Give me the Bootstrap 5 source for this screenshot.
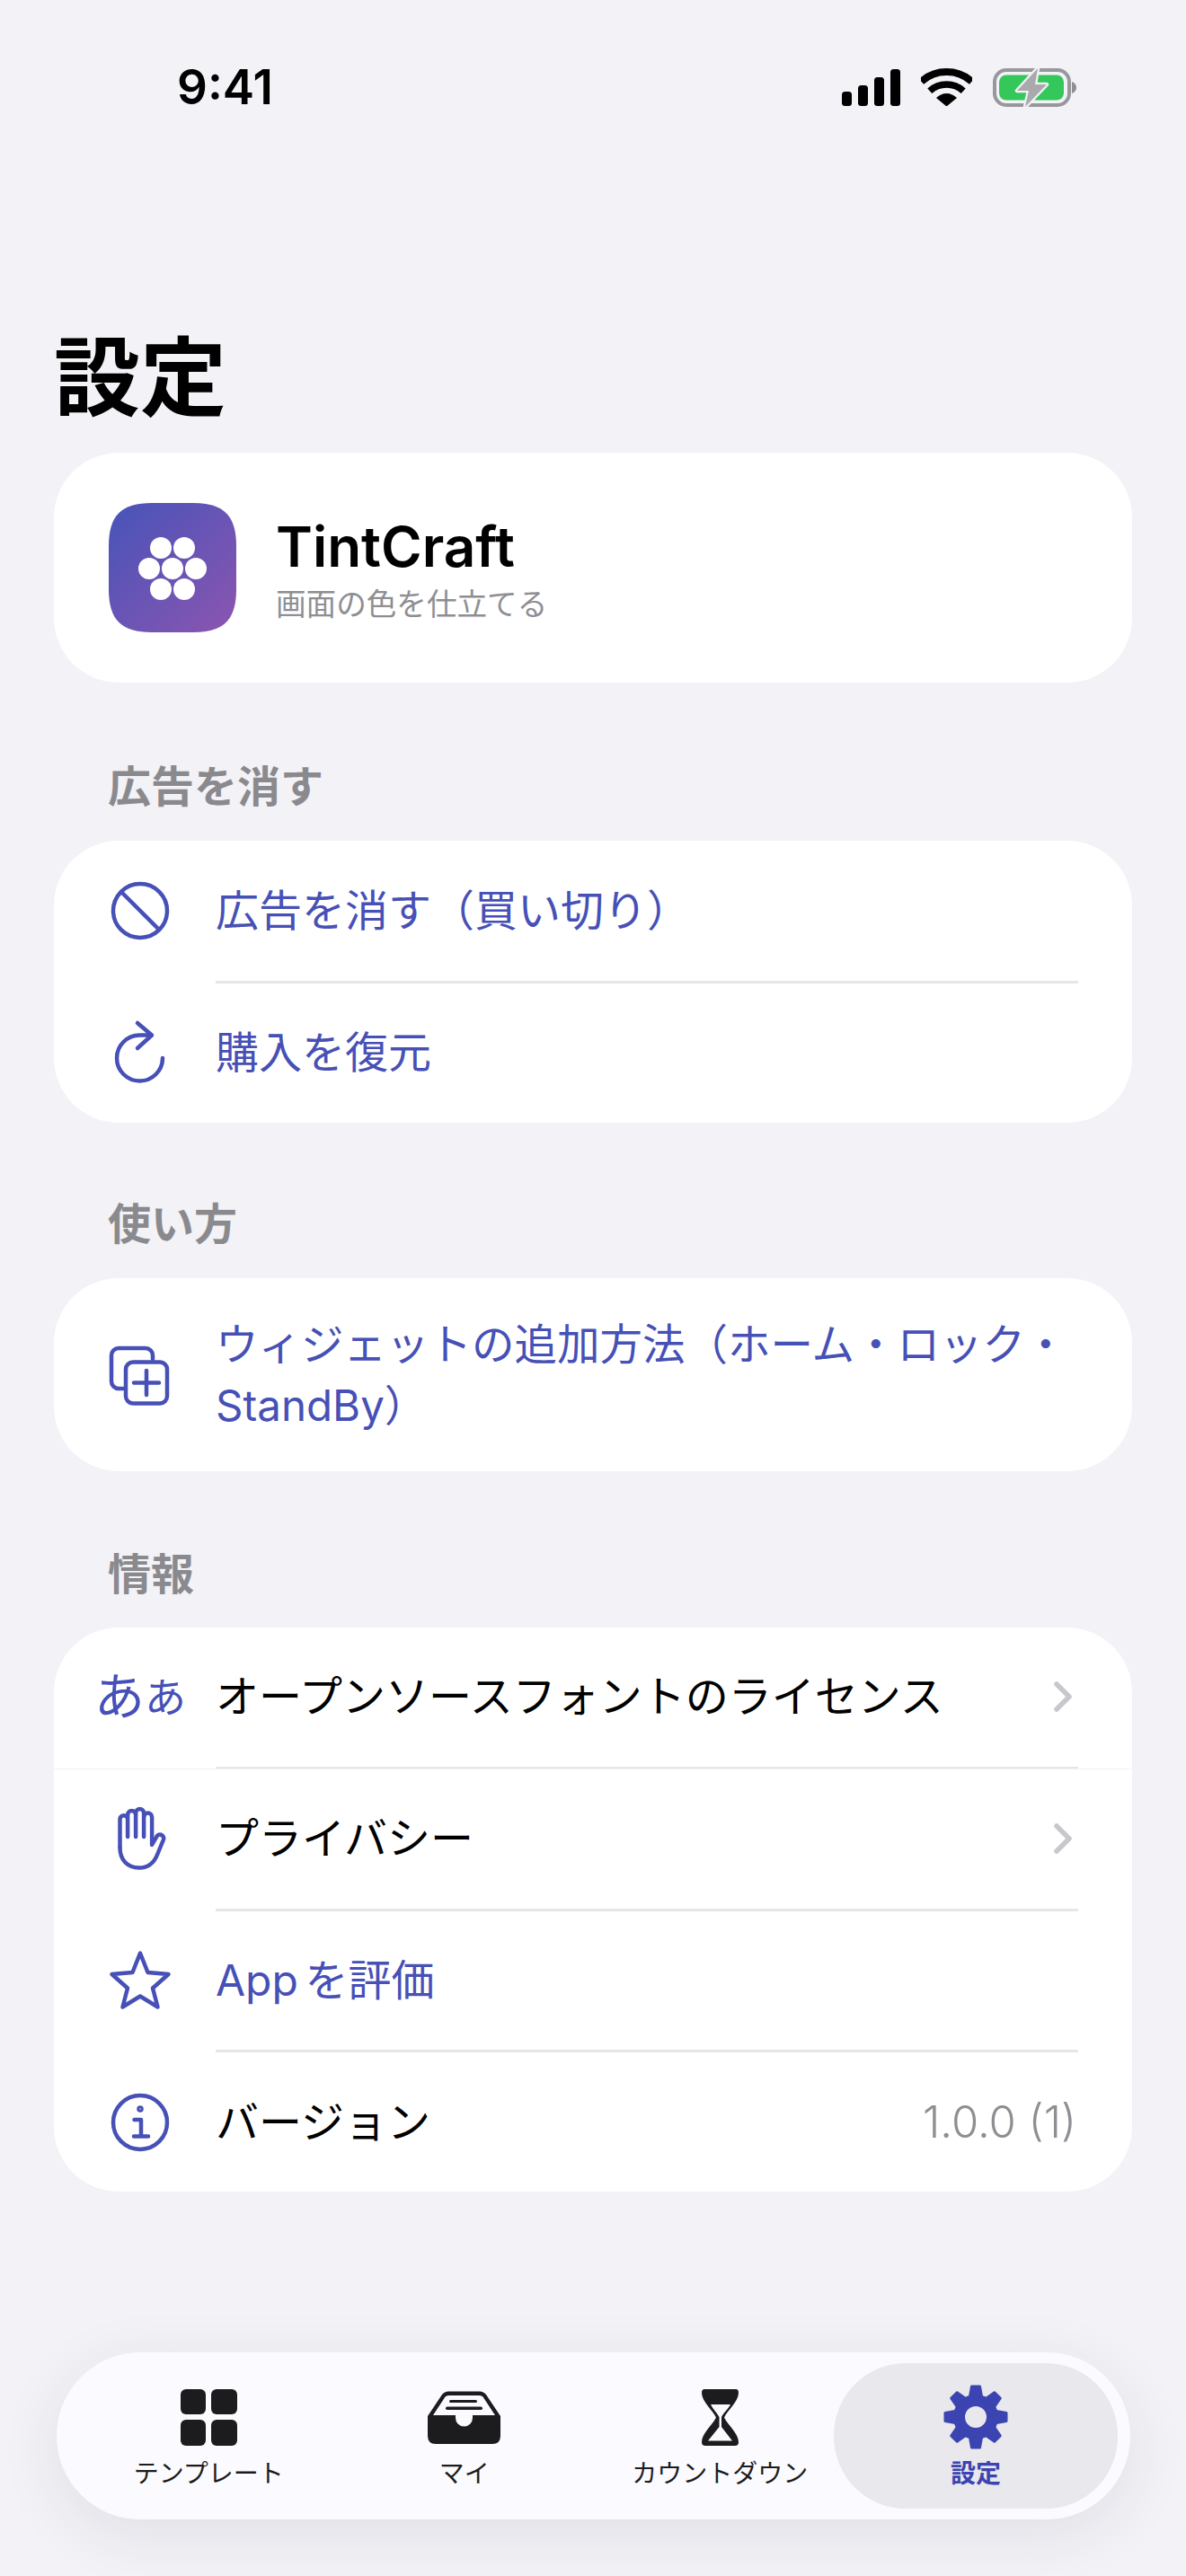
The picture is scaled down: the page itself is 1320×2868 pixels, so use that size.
<!DOCTYPE html>
<html lang="ja">
<head>
  <meta charset="UTF-8" />
  <meta name="viewport" content="width=device-width, initial-scale=1" />
  <title>設定</title>

  <link href="https://cdn.jsdelivr.net/npm/bootstrap@5.3.3/dist/css/bootstrap.min.css" rel="stylesheet">

  <style>
    body {
      font-family: Inter, "Noto Sans CJK JP", sans-serif;
      background-color: #f2f2f7;
      color: #000;
      min-height: 100vh;
    }
    .status-strip {
      padding: 66px 122px 0 197px;
      height: 128px;
    }
    .status-time {
      font-size: 53px;
      font-weight: 600;
      line-height: 62px;
    }
    .status-icons { gap: 23px; }
    .page-title {
      font-size: 96px;
      font-weight: 700;
      line-height: 110px;
      margin: 237px 0 29px 60px;
    }
    .pref-card {
      margin: 0 60px;
      background-color: #fff;
      border-radius: 72px;
      border: 0;
      overflow: hidden;
    }
    .app-card {
      height: 256px;
      padding-left: 61px;
      gap: 44px;
    }
    .app-icon { width: 142px; height: 144px; }
    .app-name {
      font-size: 62px;
      font-weight: 600;
      line-height: 72px;
      margin-top: 3px;
    }
    .app-sub {
      font-size: 33.6px;
      line-height: 44px;
      color: #8e8e93;
      margin-top: 6px;
    }
    .group-label {
      font-size: 48px;
      font-weight: 700;
      line-height: 60px;
      color: #8a8a8e;
      margin: 85px 0 30px 120px;
    }
    .group-label.is-ads { margin: 86px 0 30px 120px; }
    .group-label.is-howto { margin-top: 83px; }
    .group-label.is-info { margin-bottom: 29px; }
    .pref-row {
      height: 155.5px;
      padding: 0 62px 0 0;
      border: 0;
      background: none;
      font-size: 48px;
      line-height: 68px;
      color: #000;
    }
    .pref-row.is-tall { height: 215px; font-size: 47.5px; }
    .pref-row.is-dense { height: 154.75px; }
    .pref-row.is-link { color: #4650b6; }
    .pref-ico {
      width: 180px;
      padding-left: 56px;
      flex: none;
    }
    .pref-ico svg, .ico-kana { width: 80px; height: 80px; display: block; }
    .ico-stroke {
      fill: none;
      stroke: #4650b6;
      stroke-width: 4.5;
      stroke-linecap: round;
      stroke-linejoin: round;
    }
    .ico-kana {
      color: #4650b6;
      white-space: nowrap;
      font-size: 56px;
      line-height: 80px;
    }
    .ico-kana small { font-size: 46px; }
    .row-sep {
      height: 3px;
      margin: 0 60px 0 180px;
      background-color: #e6e6e9;
    }
    .row-rule {
      height: 1px;
      margin-top: -1px;
      background-color: #f2f2f7;
    }
    .app-rate { word-spacing: -6px; }
    .row-hint { color: #8e8e93; font-size: 49px; font-weight: 300; }
    .row-chev { width: 20px; height: 34px; margin-right: 5px; }
    .tab-shell {
      width: 1195px;
      height: 186px;
      margin: 179px 0 0 63px;
      padding: 12px 14px 12px 27px;
      border-radius: 93px;
      background-color: #fbfbff;
      box-shadow: 0 16px 70px rgba(40, 40, 60, .09);
    }
    .tab-cell {
      width: 284.5px;
      padding-top: 24px;
      color: #1c1c1e;
      font-size: 28px;
      line-height: 36px;
    }
    .tab-cell.is-on {
      width: 316px;
      margin-left: -15.5px;
      border-radius: 80px;
      background-color: #e8e8ed;
      color: #3b44b0;
      font-weight: 700;
    }
    .tab-ico {
      height: 72px;
      margin-bottom: 9px;
    }
    .tile-grid {
      display: grid;
      grid-template-columns: 28.5px 28.5px;
      grid-auto-rows: 28.5px;
      gap: 6px;
    }
    .tile-grid span { background-color: #1c1c1e; border-radius: 6px; }
  </style>
</head>

<body>
  <!-- Status bar -->
  <div class="status-strip d-flex justify-content-between align-items-center">
    <div class="status-time">9:41</div>
    <div class="status-icons d-flex align-items-center">
      <svg width="65" height="41" viewBox="0 0 65 41">
        <rect x="0" y="25" width="11" height="16" rx="3.5" />
        <rect x="18" y="18" width="11" height="23" rx="3.5" />
        <rect x="36" y="9" width="11" height="32" rx="3.5" />
        <rect x="54" y="0" width="11" height="41" rx="3.5" />
      </svg>
      <svg width="57" height="42" viewBox="0 0 57 42" fill="none" stroke="#000">
        <path d="M.4 14.8A42 42 0 0 1 56.6 14.8" stroke-width="8" />
        <path d="M9.8 25.2A28 28 0 0 1 47.2 25.2" stroke-width="7.5" />
        <path d="M28.5 42.5 17 33A16 16 0 0 1 40 33Z" fill="#000" stroke="none" />
      </svg>
      <svg width="93" height="43" viewBox="0 0 93 43">
        <rect x="2" y="2" width="83" height="39" rx="13" fill="none" stroke="#98989c" stroke-width="4" />
        <path d="M88 15c3 1 5 3.500 5 6.500s-2 5.500-5 6.500z" fill="#8e8e93" />
        <rect x="7" y="7.500" width="72" height="28" rx="8" fill="#34c759" />
        <path d="M50 0 27 25H40L36 43 60 18H47Z" fill="#a9a9ae" stroke="#f2f2f7" stroke-width="4.500" stroke-linejoin="round" paint-order="stroke" />
      </svg>
    </div>
  </div>

  <h1 class="page-title">設定</h1>

  <!-- App card -->
  <div class="pref-card app-card d-flex align-items-center">
    <svg class="app-icon" viewBox="0 0 142 144">
      <defs>
        <linearGradient id="appGrad" x1="0" y1="0" x2="1" y2="1">
          <stop offset="0.05" stop-color="#4a54b8" />
          <stop offset="1" stop-color="#8c55b0" />
        </linearGradient>
      </defs>
      <path d="M48 0H94C128 0 142 14 142 48V96C142 130 128 144 94 144H48C14 144 0 130 0 96V48C0 14 14 0 48 0Z" fill="url(#appGrad)" />
      <g fill="#fff">
        <circle cx="58" cy="50" r="12" />
        <circle cx="84" cy="50" r="12" />
        <circle cx="45" cy="73" r="12" />
        <circle cx="71" cy="73" r="12" />
        <circle cx="97" cy="73" r="12" />
        <circle cx="58" cy="96" r="12" />
        <circle cx="84" cy="96" r="12" />
      </g>
    </svg>
    <div>
      <div class="app-name">TintCraft</div>
      <div class="app-sub">画面の色を仕立てる</div>
    </div>
  </div>

  <!-- 広告を消す -->
  <div class="group-label is-ads">広告を消す</div>
  <div class="list-group pref-card">
    <a href="#" class="list-group-item pref-row is-link d-flex align-items-center">
      <span class="pref-ico">
        <svg viewBox="0 0 80 80" class="ico-stroke"><circle cx="40" cy="40" r="30" /><path d="M19 19 61 61" /></svg>
      </span>
      <span>広告を消す（買い切り）</span>
    </a>
    <div class="row-sep"></div>
    <a href="#" class="list-group-item pref-row is-link d-flex align-items-center">
      <span class="pref-ico">
        <svg viewBox="0 0 80 80" class="ico-stroke"><path d="M50 20.500H39.500A25.500 25.500 0 1 0 65 46" /><path d="M37 7 53 20.500 37 35" /></svg>
      </span>
      <span>購入を復元</span>
    </a>
  </div>

  <!-- 使い方 -->
  <div class="group-label is-howto">使い方</div>
  <div class="list-group pref-card">
    <a href="#" class="list-group-item pref-row is-tall is-link d-flex align-items-center">
      <span class="pref-ico">
        <svg viewBox="0 0 80 80" class="ico-stroke">
          <path d="M54 22V18A8 8 0 0 0 46 10H16A8 8 0 0 0 8 18V47A8 8 0 0 0 16 55H21" />
          <rect x="24" y="25.500" width="46" height="46" rx="8" />
          <path d="M33 48.500H61M47 35V62" />
        </svg>
      </span>
      <span>ウィジェットの追加方法（ホーム・ロック・StandBy）</span>
    </a>
  </div>

  <!-- 情報 -->
  <div class="group-label is-info">情報</div>
  <div class="list-group pref-card">
    <a href="#" class="list-group-item pref-row is-dense d-flex align-items-center">
      <span class="pref-ico">
        <span class="ico-kana d-flex justify-content-center">あ<small>あ</small></span>
      </span>
      <span class="flex-grow-1">オープンソースフォントのライセンス</span>
      <svg class="row-chev" viewBox="0 0 20 34" fill="none" stroke="#c7c7cc" stroke-width="5.500" stroke-linecap="round" stroke-linejoin="round"><path d="M3 3 17 17 3 31" /></svg>
    </a>
    <div class="row-sep"></div>
    <div class="row-rule"></div>
    <a href="#" class="list-group-item pref-row is-dense d-flex align-items-center">
      <span class="pref-ico">
        <svg viewBox="0 0 80 80" class="ico-stroke">
          <path d="M17.500 50V18.500A4.300 4.300 0 0 1 26.100 18.500V38" />
          <path d="M26.100 17V13.500A4.500 4.500 0 0 1 35.100 13.500V38" />
          <path d="M35.100 13V11.500A4.500 4.500 0 0 1 44.100 11.500V38" />
          <path d="M44.100 16A4.500 4.500 0 0 1 53.100 16V47L58 38.500A4 4 0 0 1 66 41L59 58C55 68 48 72.500 39 72.500 26 72.500 17.500 64 17.500 50" />
        </svg>
      </span>
      <span class="flex-grow-1">プライバシー</span>
      <svg class="row-chev" viewBox="0 0 20 34" fill="none" stroke="#c7c7cc" stroke-width="5.500" stroke-linecap="round" stroke-linejoin="round"><path d="M3 3 17 17 3 31" /></svg>
    </a>
    <div class="row-sep"></div>
    <a href="#" class="list-group-item pref-row is-dense is-link d-flex align-items-center">
      <span class="pref-ico">
        <svg viewBox="0 0 80 80" class="ico-stroke">
          <path d="M40 9.500 48.500 31 71.500 33 54 48.500 59.500 69.500 40 57.500 20.500 69.500 26 48.500 8.500 33 31.500 31Z" />
        </svg>
      </span>
      <span class="app-rate">App を評価</span>
    </a>
    <div class="row-sep"></div>
    <div class="list-group-item pref-row is-dense d-flex align-items-center">
      <span class="pref-ico">
        <svg viewBox="0 0 80 80" class="ico-stroke">
          <circle cx="40" cy="40" r="30" />
          <circle cx="40" cy="25" r="1.500" />
          <path d="M33.500 37H41V55.500M33 55.500H49" />
        </svg>
      </span>
      <span class="flex-grow-1">バージョン</span>
      <span class="row-hint">1.0.0 (1)</span>
    </div>
  </div>

  <!-- Tab bar -->
  <nav class="tab-shell d-flex">
    <a class="tab-cell d-flex flex-column align-items-center text-decoration-none">
      <span class="tab-ico d-flex align-items-center">
        <span class="tile-grid"><span></span><span></span><span></span><span></span></span>
      </span>
      <span>テンプレート</span>
    </a>
    <a class="tab-cell d-flex flex-column align-items-center text-decoration-none">
      <span class="tab-ico d-flex align-items-center">
        <svg width="81" height="59" viewBox="0 0 81 59" fill="#1c1c1e">
          <path fill-rule="evenodd" d="M0 28 16 4Q19 .5 23 .5H58Q62 .5 65 4L81 28V50Q81 59 72 59H9Q0 59 0 50ZM6 27H31V30A9.500 9.500 0 0 0 50 30V27H75L61.500 6.500Q60 5 58 5H23Q21 5 19.500 6.500Z" />
          <rect x="24" y="10" width="31" height="3" rx="1.500" />
          <rect x="20" y="17.500" width="41" height="3.500" rx="1.700" />
        </svg>
      </span>
      <span>マイ</span>
    </a>
    <a class="tab-cell d-flex flex-column align-items-center text-decoration-none">
      <span class="tab-ico d-flex align-items-center">
        <svg width="41" height="63" viewBox="0 0 41 63" fill="#1c1c1e">
          <path fill-rule="evenodd" d="M3 0H38Q41 0 41 4C41 14 29 23 25 31.500 29 40 41 49 41 59Q41 63 37 63H4Q0 63 0 59C0 49 12 40 16 31.500 12 23 0 14 0 4Q0 0 3 0ZM10 17C12 22 17 26 19.500 31V42L7 57.500H34L22 42V31C24 26 30 22 32 17Z" />
        </svg>
      </span>
      <span>カウントダウン</span>
    </a>
    <a class="tab-cell is-on d-flex flex-column align-items-center text-decoration-none">
      <span class="tab-ico d-flex align-items-center">
        <svg width="72" height="72" viewBox="0 0 72 72">
          <circle cx="36" cy="36" r="18.500" fill="none" stroke="#3b44b0" stroke-width="13" />
          <g fill="#3b44b0" stroke="#3b44b0" stroke-width="3" stroke-linejoin="round">
            <path id="gearTooth" d="M29 16 31.500 2H40.500L43 16Z" />
            <use href="#gearTooth" transform="rotate(45 36 36)" />
            <use href="#gearTooth" transform="rotate(90 36 36)" />
            <use href="#gearTooth" transform="rotate(135 36 36)" />
            <use href="#gearTooth" transform="rotate(180 36 36)" />
            <use href="#gearTooth" transform="rotate(225 36 36)" />
            <use href="#gearTooth" transform="rotate(270 36 36)" />
            <use href="#gearTooth" transform="rotate(315 36 36)" />
          </g>
        </svg>
      </span>
      <span>設定</span>
    </a>
  </nav>

  <script src="https://cdn.jsdelivr.net/npm/bootstrap@5.3.3/dist/js/bootstrap.bundle.min.js"></script>
</body>
</html>
